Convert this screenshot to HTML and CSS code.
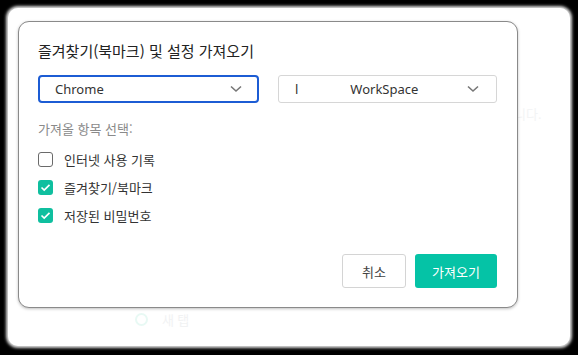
FILE: index.html
```html
<!DOCTYPE html>
<html lang="ko">
<head>
<meta charset="utf-8">
<link rel="stylesheet" href="styles.css">
</head>
<body>
<div class="frame">
  <span class="bg-text bg-text-1">니다.</span>
  <span class="bg-item"><span class="bg-dot"></span>새 탭</span>
  <div class="dialog">
    <h1 class="title">즐겨찾기(북마크) 및 설정 가져오기</h1>
    <div class="selects">
      <div class="select active">
        <span class="select-text">Chrome</span>
        <svg class="chev" width="12" height="8" viewBox="0 0 12 8"><path d="M1 1.5 L6 6 L11 1.5" fill="none" stroke="#777" stroke-width="1.6"/></svg>
      </div>
      <div class="select">
        <span class="select-text">l<span class="gap"></span>WorkSpace</span>
        <svg class="chev" width="12" height="8" viewBox="0 0 12 8"><path d="M1 1.5 L6 6 L11 1.5" fill="none" stroke="#777" stroke-width="1.6"/></svg>
      </div>
    </div>
    <p class="label">가져올 항목 선택:</p>
    <ul class="options">
      <li class="option"><span class="box"></span>인터넷 사용 기록</li>
      <li class="option"><span class="box checked"><svg width="11" height="9" viewBox="0 0 11 9"><path d="M1.5 4.5 L4.2 7 L9.5 1.8" fill="none" stroke="#fff" stroke-width="1.7"/></svg></span>즐겨찾기/북마크</li>
      <li class="option"><span class="box checked"><svg width="11" height="9" viewBox="0 0 11 9"><path d="M1.5 4.5 L4.2 7 L9.5 1.8" fill="none" stroke="#fff" stroke-width="1.7"/></svg></span>저장된 비밀번호</li>
    </ul>
    <div class="actions">
      <button class="btn btn-cancel">취소</button>
      <button class="btn btn-primary">가져오기</button>
    </div>
  </div>
</div>
</body>
</html>
```
FILE: styles.css
```css
html, body {
  margin: 0;
  padding: 0;
  background: #000;
  width: 578px;
  height: 355px;
  overflow: hidden;
  font-family: "Noto Sans", "Noto Sans CJK KR", sans-serif;
}
.frame {
  position: relative;
  margin: 8px 0 0 8px;
  width: 562px;
  height: 338px;
  background: #fff;
  border-radius: 10px;
  box-shadow: 0 0 3px 2px #ddd;
  padding: 13px 0 0 10px;
  box-sizing: border-box;
}
.bg-text {
  position: absolute;
  color: #f3f4f5;
  font-size: 13px;
}
.bg-text-1 { left: 506px; top: 96px; }
.bg-item {
  position: absolute;
  left: 127px;
  top: 302px;
  display: flex;
  align-items: center;
  gap: 14px;
  color: #f1f2f3;
  font-size: 13px;
}
.bg-dot {
  width: 9px;
  height: 9px;
  border: 2.5px solid #e8f9f4;
  border-radius: 50%;
}
.dialog {
  position: relative;
  width: 500px;
  height: 287px;
  box-sizing: border-box;
  border: 1px solid #8a8a8a;
  border-radius: 11px;
  box-shadow: 0 1px 3px rgba(0,0,0,0.25);
  background: #fff;
  padding: 18px 20px 0 19px;
  display: flex;
  flex-direction: column;
}
.title {
  margin: 0;
  font-size: 15px;
  font-weight: 400;
  color: #222;
  line-height: 22px;
  font-family: "Noto Sans CJK KR", sans-serif;
}
.selects {
  display: flex;
  gap: 19px;
  margin-top: 13px;
}
.select {
  box-sizing: border-box;
  width: 220px;
  height: 28px;
  border: 1px solid #d6d6d6;
  border-radius: 3px;
  display: flex;
  align-items: center;
  justify-content: space-between;
  padding: 0 17px 0 16px;
  font-size: 13px;
  color: #333;
}
.select.active {
  width: 222px;
  border: 2px solid #1c5cd4;
  border-radius: 4px;
  padding-left: 15px;
  padding-right: 15px;
}
.gap { display: inline-block; width: 52px; }
.chev { display: block; }
.label {
  margin: 17px 0 0;
  font-size: 13px;
  color: #8a8a8a;
  line-height: 18px;
  font-family: "Noto Sans CJK KR", sans-serif;
}
.options {
  list-style: none;
  margin: 12px 0 0;
  padding: 0;
  display: flex;
  flex-direction: column;
  gap: 10px;
}
.option {
  display: flex;
  align-items: center;
  gap: 11px;
  height: 18px;
  font-size: 13px;
  color: #333;
  font-family: "Noto Sans CJK KR", sans-serif;
}
.box {
  box-sizing: border-box;
  width: 15px;
  height: 15px;
  border: 1.5px solid #6a6a6a;
  border-radius: 3px;
  display: flex;
  align-items: center;
  justify-content: center;
}
.box.checked {
  border: none;
  background: #0fbf9f;
}
.actions {
  display: flex;
  justify-content: flex-end;
  gap: 9px;
  margin-top: auto;
  margin-bottom: 19px;
}
.btn {
  height: 34px;
  border-radius: 3px;
  font-size: 13px;
  font-family: "Noto Sans CJK KR", sans-serif;
  cursor: pointer;
}
.btn-cancel {
  width: 64px;
  background: #fff;
  border: 1px solid #d4d4d4;
  color: #444;
}
.btn-primary {
  width: 82px;
  background: #05c3a6;
  border: none;
  color: #fff;
}
```
